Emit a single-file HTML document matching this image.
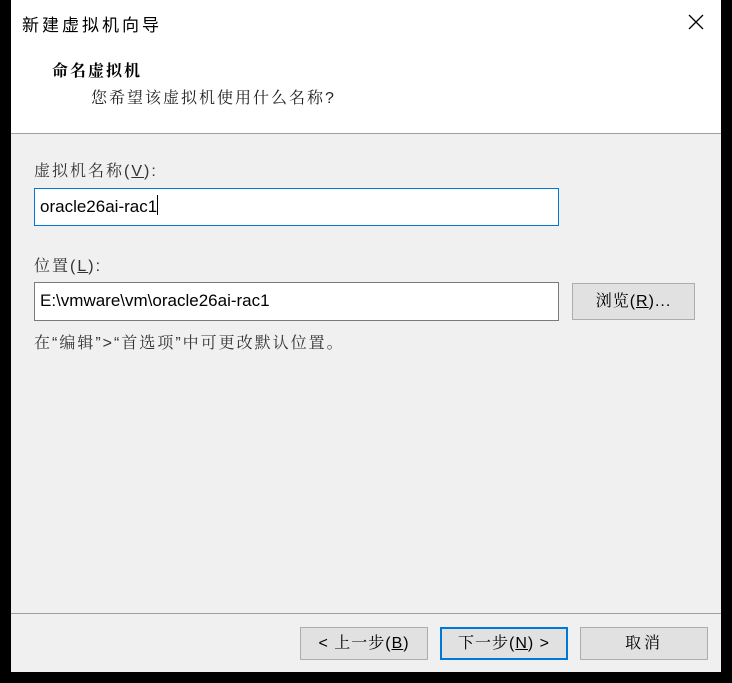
<!DOCTYPE html>
<html><head><meta charset="utf-8"><style>
*{margin:0;padding:0;box-sizing:border-box}
body{width:732px;height:683px;background:#000;position:relative;overflow:hidden;font-family:"Liberation Sans","Noto Serif CJK SC",serif;color:#000}
.dlg{position:absolute;left:11px;top:0;width:710px;height:672px;background:#f0f0f0}
.hdr{position:absolute;left:0;top:0;width:710px;height:134px;background:#fff;border-bottom:1px solid #a0a0a0}
.a{position:absolute;white-space:nowrap}
.c{font-size:16px;letter-spacing:2px}
.inp{position:absolute;background:#fff;font-size:17px;padding-left:5px;line-height:36px;font-family:"Liberation Sans",sans-serif}
.btn{position:absolute;background:#e1e1e1;border:1px solid #adadad;font-size:16px;letter-spacing:1px;text-align:center;color:#000}
u{text-decoration:underline}
</style></head><body>
<div class="dlg">
<div class="hdr">
<div class="a" style="left:11px;top:11px;font-size:17px;letter-spacing:3px;font-family:'Liberation Sans','Noto Sans CJK SC',sans-serif">新建虚拟机向导</div>
<svg class="a" style="left:677px;top:14px" width="16" height="16"><path d="M1 1L15 15M15 1L1 15" stroke="#000" stroke-width="1.3"/></svg>
<div class="a" style="left:41px;top:58px;font-size:16px;letter-spacing:2px;font-weight:bold">命名虚拟机</div>
<div class="a c" style="left:80px;top:85px;color:#222">您希望该虚拟机使用什么名称?</div>
</div>
<div class="a c" style="left:23px;top:158px;color:#333">虚拟机名称(<u>V</u>):</div>
<div class="inp" style="left:23px;top:188px;width:525px;height:38px;border:1px solid #0078d7">oracle26ai-rac1<span style="display:inline-block;width:1px;height:20px;background:#000;vertical-align:-3px"></span></div>
<div class="a c" style="left:23px;top:253px;color:#333">位置(<u>L</u>):</div>
<div class="inp" style="left:23px;top:282px;width:525px;height:39px;border:1px solid #7a7a7a">E:\vmware\vm\oracle26ai-rac1</div>
<div class="btn" style="left:561px;top:283px;width:123px;height:37px;line-height:35px">浏览(<u>R</u>)...</div>
<div class="a c" style="left:23px;top:330px;color:#333">在“编辑”&gt;“首选项”中可更改默认位置。</div>
<div class="a" style="left:0;top:613px;width:710px;height:1px;background:#a0a0a0"></div>
<div class="btn" style="left:289px;top:627px;width:128px;height:33px;line-height:31px">&lt; 上一步(<u>B</u>)</div>
<div class="btn" style="left:429px;top:627px;width:128px;height:33px;line-height:29px;border:2px solid #0078d7">下一步(<u>N</u>) &gt;</div>
<div class="btn" style="left:569px;top:627px;width:128px;height:33px;line-height:31px;letter-spacing:3px">取消</div>
</div>
</body></html>
